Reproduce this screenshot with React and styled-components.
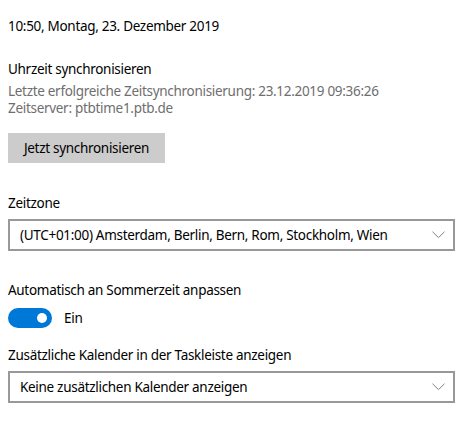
import React from "react";
import styled, { createGlobalStyle } from "styled-components";

const Global = createGlobalStyle`
  html, body { margin: 0; padding: 0; background: #fff; }
  body { font-family: "Noto Sans", "Open Sans", sans-serif; color: #000; }
`;

const Page = styled.div`
  width: 469px;
  height: 427px;
  box-sizing: border-box;
  padding: 16px 14px 0 8px;
  display: flex;
  flex-direction: column;
  font-size: 13.5px;
  letter-spacing: -0.3px;
`;

const Text = styled.div`
  line-height: ${(p) => (p.$muted ? 17 : 20)}px;
  color: ${(p) => (p.$muted ? "#6e6e6e" : "#000")};
  margin-top: ${(p) => p.$mt || 0}px;
  white-space: nowrap;
`;

const Button = styled.button`
  align-self: flex-start;
  margin-top: ${(p) => p.$mt || 0}px;
  width: 157px;
  height: 30px;
  border: none;
  background: #cccccc;
  font-family: inherit;
  font-size: inherit;
  letter-spacing: inherit;
  color: #000;
  padding: 0;
`;

const Select = styled.div`
  margin-top: ${(p) => p.$mt || 0}px;
  height: 32px;
  box-sizing: border-box;
  border: 2px solid #999999;
  display: flex;
  align-items: center;
  justify-content: space-between;
  padding: 0 8px 0 10px;
  white-space: nowrap;
`;

const ToggleRow = styled.div`
  margin-top: ${(p) => p.$mt || 0}px;
  display: flex;
  align-items: center;
  gap: 12px;
  line-height: 20px;
`;

const Track = styled.div`
  width: 44px;
  height: 20px;
  border-radius: 10px;
  background: #0078d7;
  position: relative;
  flex: none;
`;

const Knob = styled.span`
  position: absolute;
  right: 5px;
  top: 5px;
  width: 10px;
  height: 10px;
  border-radius: 50%;
  background: #fff;
`;

const Chevron = () => (
  <svg width="13" height="8" viewBox="0 0 13 8">
    <path d="M0.5 0.8 L6.5 6.6 L12.5 0.8" fill="none" stroke="#808080" strokeWidth="1" />
  </svg>
);

export default function App() {
  return (
    <>
      <Global />
      <Page>
        <Text>10:50, Montag, 23. Dezember 2019</Text>
        <Text $mt={23}>Uhrzeit synchronisieren</Text>
        <Text $muted $mt={4}>Letzte erfolgreiche Zeitsynchronisierung: 23.12.2019 09:36:26</Text>
        <Text $muted>Zeitserver: ptbtime1.ptb.de</Text>
        <Button $mt={16}>Jetzt synchronisieren</Button>
        <Text $mt={30}>Zeitzone</Text>
        <Select $mt={6}>
          <span>(UTC+01:00) Amsterdam, Berlin, Bern, Rom, Stockholm, Wien</span>
          <Chevron />
        </Select>
        <Text $mt={29}>Automatisch an Sommerzeit anpassen</Text>
        <ToggleRow $mt={8}>
          <Track><Knob /></Track>
          <span>Ein</span>
        </ToggleRow>
        <Text $mt={17}>Zusätzliche Kalender in der Taskleiste anzeigen</Text>
        <Select $mt={6}>
          <span>Keine zusätzlichen Kalender anzeigen</span>
          <Chevron />
        </Select>
      </Page>
    </>
  );
}
